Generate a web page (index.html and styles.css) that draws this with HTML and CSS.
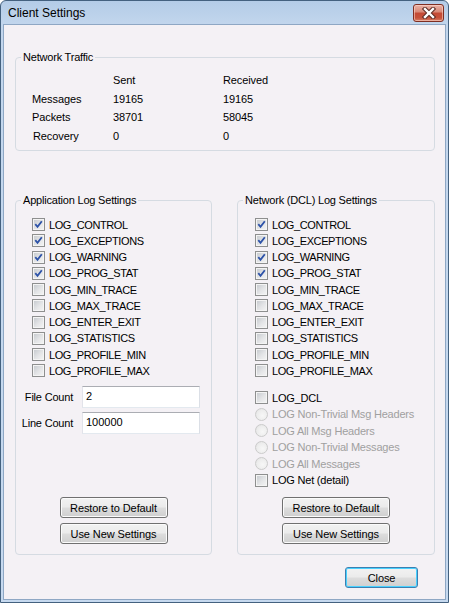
FILE: index.html
```html
<!DOCTYPE html>
<html>
<head>
<meta charset="utf-8">
<link rel="stylesheet" href="styles.css">
</head>
<body>
<div class="window">
  <div class="titlebar">
    <span class="title">Client Settings</span>
    <span class="close-x">
      <svg width="16" height="12" viewBox="0 0 16 12">
        <path d="M4 2 L12 10 M12 2 L4 10" stroke="#5a2a22" stroke-width="4.4" stroke-linecap="square" fill="none"/>
        <path d="M4 2 L12 10 M12 2 L4 10" stroke="#ffffff" stroke-width="2.4" stroke-linecap="square" fill="none"/>
      </svg>
    </span>
  </div>
  <div class="client">
    <fieldset class="group traffic">
      <legend>Network Traffic</legend>
      <div class="stats">
        <span></span><span>Sent</span><span>Received</span>
        <span>Messages</span><span>19165</span><span>19165</span>
        <span>Packets</span><span>38701</span><span>58045</span>
        <span class="recovery">Recovery</span><span>0</span><span>0</span>
      </div>
    </fieldset>

    <div class="log-groups">
      <fieldset class="group log app">
        <legend>Application Log Settings</legend>
        <div class="group-body">
          <ul class="checks">
            <li><span class="cb checked"><svg viewBox="0 0 11 11"><path d="M2.3 5.2 L4.5 7.8 L8.8 2.2"/></svg></span>LOG_CONTROL</li>
            <li><span class="cb checked"><svg viewBox="0 0 11 11"><path d="M2.3 5.2 L4.5 7.8 L8.8 2.2"/></svg></span>LOG_EXCEPTIONS</li>
            <li><span class="cb checked"><svg viewBox="0 0 11 11"><path d="M2.3 5.2 L4.5 7.8 L8.8 2.2"/></svg></span>LOG_WARNING</li>
            <li><span class="cb checked"><svg viewBox="0 0 11 11"><path d="M2.3 5.2 L4.5 7.8 L8.8 2.2"/></svg></span>LOG_PROG_STAT</li>
            <li><span class="cb"></span>LOG_MIN_TRACE</li>
            <li><span class="cb"></span>LOG_MAX_TRACE</li>
            <li><span class="cb"></span>LOG_ENTER_EXIT</li>
            <li><span class="cb"></span>LOG_STATISTICS</li>
            <li><span class="cb"></span>LOG_PROFILE_MIN</li>
            <li><span class="cb"></span>LOG_PROFILE_MAX</li>
          </ul>
          <div class="counts">
            <label class="count-label">File Count</label>
            <div class="field">2</div>
            <label class="count-label">Line Count</label>
            <div class="field">100000</div>
          </div>
          <div class="buttons">
            <button class="btn">Restore to Default</button>
            <button class="btn">Use New Settings</button>
          </div>
        </div>
      </fieldset>

      <fieldset class="group log dcl">
        <legend>Network (DCL) Log Settings</legend>
        <div class="group-body">
          <ul class="checks">
            <li><span class="cb checked"><svg viewBox="0 0 11 11"><path d="M2.3 5.2 L4.5 7.8 L8.8 2.2"/></svg></span>LOG_CONTROL</li>
            <li><span class="cb checked"><svg viewBox="0 0 11 11"><path d="M2.3 5.2 L4.5 7.8 L8.8 2.2"/></svg></span>LOG_EXCEPTIONS</li>
            <li><span class="cb checked"><svg viewBox="0 0 11 11"><path d="M2.3 5.2 L4.5 7.8 L8.8 2.2"/></svg></span>LOG_WARNING</li>
            <li><span class="cb checked"><svg viewBox="0 0 11 11"><path d="M2.3 5.2 L4.5 7.8 L8.8 2.2"/></svg></span>LOG_PROG_STAT</li>
            <li><span class="cb"></span>LOG_MIN_TRACE</li>
            <li><span class="cb"></span>LOG_MAX_TRACE</li>
            <li><span class="cb"></span>LOG_ENTER_EXIT</li>
            <li><span class="cb"></span>LOG_STATISTICS</li>
            <li><span class="cb"></span>LOG_PROFILE_MIN</li>
            <li><span class="cb"></span>LOG_PROFILE_MAX</li>
          </ul>
          <ul class="checks extra">
            <li><span class="cb"></span>LOG_DCL</li>
            <li class="disabled"><span class="rb"></span>LOG Non-Trivial Msg Headers</li>
            <li class="disabled"><span class="rb"></span>LOG All Msg Headers</li>
            <li class="disabled"><span class="rb"></span>LOG Non-Trivial Messages</li>
            <li class="disabled"><span class="rb"></span>LOG All Messages</li>
            <li><span class="cb"></span>LOG Net (detail)</li>
          </ul>
          <div class="buttons">
            <button class="btn">Restore to Default</button>
            <button class="btn">Use New Settings</button>
          </div>
        </div>
      </fieldset>
    </div>

    <div class="footer">
      <button class="btn default close-btn">Close</button>
    </div>
  </div>
</div>
</body>
</html>
```

FILE: styles.css
```css
* { box-sizing: border-box; }

html, body {
  margin: 0;
  padding: 0;
  background: #ffffff;
}

body {
  font-family: "Liberation Sans", Arial, sans-serif;
  font-size: 11px;
  color: #000;
}

.window {
  width: 449px;
  height: 603px;
  border: 1px solid #44617f;
  border-radius: 6px 6px 0 0;
  background: linear-gradient(to bottom, #b4cce7 0px, #c2d6ed 24px, #c6d9ef 100%);
  display: flex;
  flex-direction: column;
  overflow: hidden;
}

.titlebar {
  height: 23px;
  display: flex;
  align-items: flex-start;
  justify-content: space-between;
  padding: 0 4px 0 7px;
}

.title {
  font-size: 12px;
  line-height: 15px;
  margin-top: 5px;
  color: #000;
}

.close-x {
  width: 31px;
  height: 18px;
  margin-top: 3px;
  border: 1px solid #7f2e22;
  border-radius: 3px;
  background: linear-gradient(to bottom, #eab1a6 0%, #d98a78 42%, #c44a35 52%, #c6513a 80%, #d77f66 100%);
  box-shadow: inset 0 0 0 1px rgba(255, 220, 210, 0.55);
  display: flex;
  align-items: center;
  justify-content: center;
}

.close-x svg { display: block; }

.client {
  flex: 1;
  margin: 0 2px 2px;
  border: 1px solid #8ea7c4;
  background: #f4f1f5;
  display: flex;
  flex-direction: column;
}

/* group boxes */
.group {
  margin: 0;
  padding: 0;
  min-width: 0;
  border: 1px solid #d5dbe2;
  border-radius: 4px;
}

.group legend {
  padding: 0 2px;
  margin-left: 5px;
  line-height: 13px;
  font-size: 11px;
  letter-spacing: -0.2px;
}

.traffic {
  margin: 26px 10px 0 11px;
}

.stats {
  display: grid;
  grid-template-columns: 81px 110px auto;
  grid-auto-rows: 18.5px;
  align-items: center;
  padding: 7px 0 5px 16px;
  letter-spacing: -0.1px;
}

.recovery { padding-left: 1px; }

.log-groups {
  display: flex;
  gap: 25px;
  margin: 43px 10px 0 11px;
}

.app { width: 197px; }
.dcl { width: 198px; }

.group-body {
  height: 347px;
  display: flex;
  flex-direction: column;
  padding-top: 9.5px;
  padding-bottom: 10px;
}

.checks {
  list-style: none;
  margin: 0;
  padding: 0 0 0 16px;
}

.dcl .checks { padding-left: 17px; }

.checks li {
  height: 16.25px;
  display: flex;
  align-items: center;
  white-space: nowrap;
  letter-spacing: -0.4px;
}

.checks.extra { margin-top: 10.5px; }
.checks.extra li { height: 16.5px; letter-spacing: -0.2px; }

.checks li.disabled { color: #a0a0a0; }

.cb {
  width: 13px;
  height: 13px;
  flex: none;
  margin-right: 4px;
  border: 1px solid #8e8f8f;
  background: linear-gradient(135deg, #c3c7cc 0%, #e4e5e7 55%, #f5f5f5 100%);
  box-shadow: inset 0 0 0 1px #f4f4f4;
}

.cb svg {
  display: block;
  width: 11px;
  height: 11px;
}

.cb svg path {
  fill: none;
  stroke: #2d52a8;
  stroke-width: 1.8;
  stroke-linecap: butt;
  stroke-linejoin: miter;
}

.rb {
  width: 13px;
  height: 13px;
  flex: none;
  margin-right: 4px;
  border: 1px solid #cbcbcb;
  border-radius: 50%;
  background: radial-gradient(circle at 60% 60%, #f7f7f7 0%, #ececec 60%, #dcdcdc 100%);
}

.counts {
  display: grid;
  grid-template-columns: 57px 118px;
  column-gap: 9px;
  row-gap: 4px;
  align-items: center;
  margin-top: 7px;
}

.count-label {
  justify-self: end;
  letter-spacing: -0.2px;
}

.field {
  height: 22px;
  border: 1px solid;
  border-color: #abadb3 #dbdfe6 #e3e9ef #e2e3ea;
  background: #fff;
  padding: 2px 3px 0;
  line-height: 15px;
}

.buttons {
  margin-top: auto;
  display: flex;
  flex-direction: column;
  align-items: center;
  gap: 5px;
}

.btn {
  width: 108px;
  height: 21px;
  padding: 0;
  font-family: "Liberation Sans", Arial, sans-serif;
  font-size: 11px;
  letter-spacing: -0.1px;
  color: #000;
  border: 1px solid #707070;
  border-radius: 3px;
  background: linear-gradient(to bottom, #f2f2f2 0%, #ebebeb 48%, #dddddd 52%, #cfcfcf 100%);
  box-shadow: inset 0 0 0 1px #fbfbfb;
}

.btn.default {
  border-color: #3c7fb1;
  box-shadow: inset 0 0 0 1px #48d1ff;
}

.footer {
  display: flex;
  justify-content: flex-end;
  padding-right: 27px;
  margin-top: 12px;
}

.close-btn { width: 73px; }
```
